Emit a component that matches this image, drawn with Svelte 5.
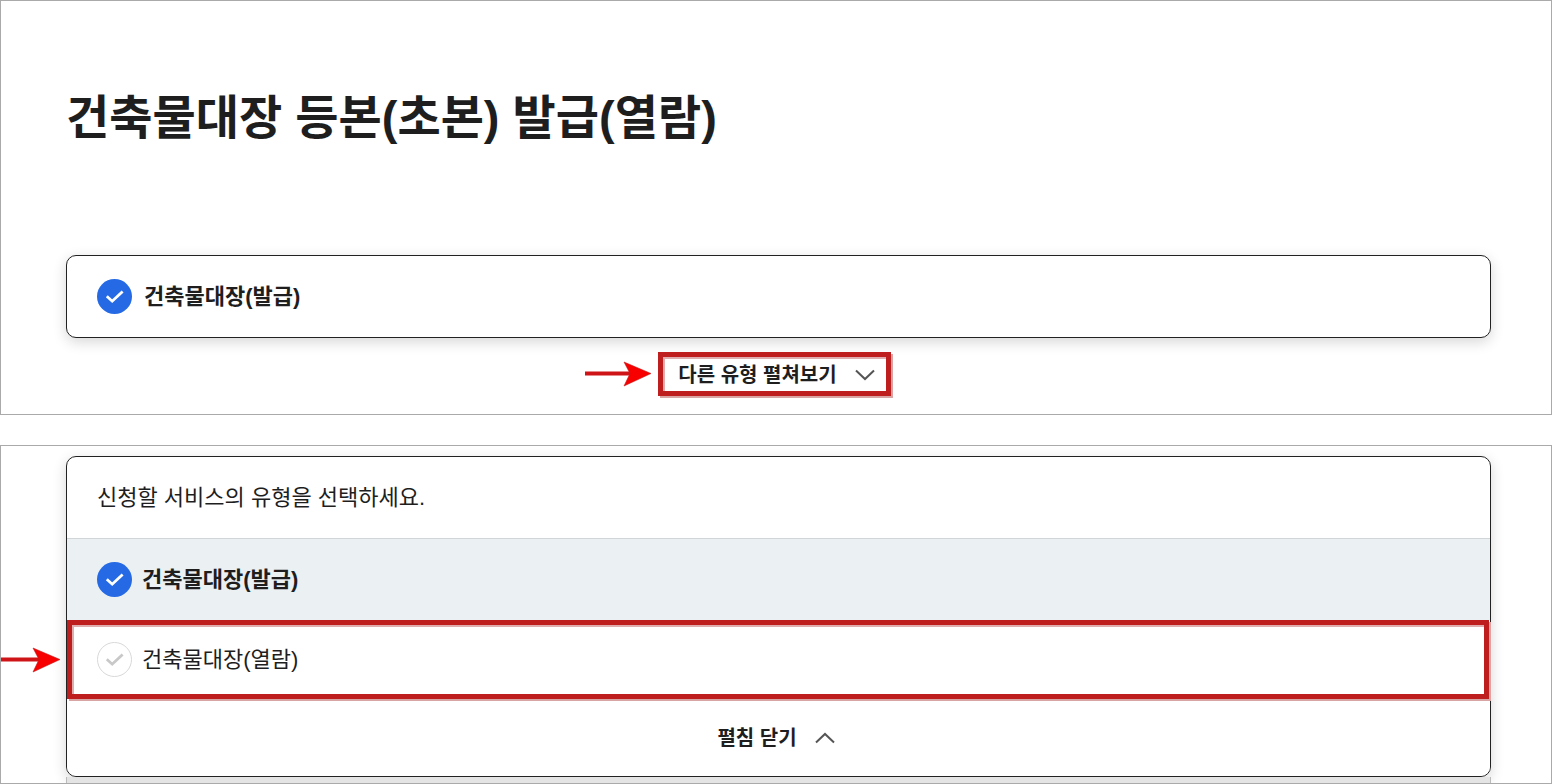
<script>
  const options = [
    { id: 'issue', label: '건축물대장(발급)' },
    { id: 'view', label: '건축물대장(열람)', marked: true }
  ];
  let selected = $state('issue');
</script>

{#snippet check(on)}
  <svg class="check" viewBox="0 0 35 35" aria-hidden="true">
    {#if on}
      <circle cx="17.5" cy="17.5" r="17.5" fill="#256ae4" />
    {:else}
      <circle cx="17.5" cy="17.5" r="17" fill="#fff" stroke="#d8d8d8" />
    {/if}
    <path d="M9.8 17.3L15.2 22.2L25.6 12.4" fill="none" stroke={on ? '#fff' : '#c8c8c8'} stroke-width="2.8" />
  </svg>
{/snippet}

{#snippet arrow()}
  <svg class="arrow" viewBox="0 0 66 26" aria-hidden="true">
    <path d="M0 12.5H46" stroke="#cf1418" stroke-width="4" />
    <path d="M39 1L66 12.5L39 25L45 12.5Z" fill="#f80000" stroke="#c41a1a" stroke-width=".6" />
  </svg>
{/snippet}

<main>
  <section class="panel first">
    <h1>건축물대장 등본(초본) 발급(열람)</h1>
    <div class="card current">
      {@render check(true)}
      <strong>건축물대장(발급)</strong>
    </div>
    <div class="expand">
      <button type="button" class="marked">
        {@render arrow()}
        다른 유형 펼쳐보기
        <svg class="chevron" viewBox="0 0 20 12" aria-hidden="true"><path d="M1 1.5L10 10L19 1.5" /></svg>
      </button>
    </div>
  </section>

  <section class="panel second">
    <fieldset class="card">
      <legend>신청할 서비스의 유형을 선택하세요.</legend>
      {#each options as option (option.id)}
        <label class="option" class:selected={selected === option.id} class:marked={option.marked}>
          {#if option.marked}{@render arrow()}{/if}
          <input type="radio" name="type" value={option.id} bind:group={selected} />
          {@render check(selected === option.id)}
          <span>{option.label}</span>
        </label>
      {/each}
      <button type="button" class="collapse">
        펼침 닫기
        <svg class="chevron" viewBox="0 0 20 12" aria-hidden="true"><path d="M1 10.5L10 2L19 10.5" /></svg>
      </button>
    </fieldset>
    <div class="underlay"></div>
  </section>
</main>

<style>
  :global(body) {
    margin: 0;
    background: #fff;
  }

  main {
    display: flex;
    flex-direction: column;
    gap: 30px;
    font-family: 'Liberation Sans', 'Noto Sans CJK KR', sans-serif;
    font-size: 22px;
    line-height: 32px;
    color: #1e1e1e;
  }

  .panel {
    box-sizing: border-box;
    border: 1px solid #aaa;
    overflow: hidden;
  }

  .first {
    padding: 82px 60px 18px 65px;
  }

  .second {
    padding: 10px 60px 0 65px;
  }

  h1 {
    margin: 0 0 102px;
    font-size: 47px;
    line-height: 70px;
    font-weight: 700;
  }

  .card {
    box-sizing: border-box;
    margin: 0;
    padding: 0;
    border: 1px solid #222;
    border-radius: 10px;
    background: #fff;
    box-shadow: 0 4px 14px rgba(0, 0, 0, 0.16);
  }

  .current {
    display: flex;
    align-items: center;
    gap: 12px;
    padding: 23px 30px;
  }

  .check {
    flex: none;
    width: 35px;
    height: 35px;
  }

  .expand {
    display: flex;
    justify-content: center;
    margin-top: 14px;
    padding-right: 8px;
  }

  button {
    display: flex;
    align-items: center;
    justify-content: center;
    gap: 18px;
    border: 0;
    background: #fff;
    color: inherit;
    font: inherit;
    font-size: 20px;
    font-weight: 700;
    cursor: pointer;
  }

  .marked {
    position: relative;
    border: 5px solid #bf1e1e;
    box-shadow: 2px 2px 0 #d9a4a4, inset 2px 2px 0 #dfadad;
  }

  .expand button {
    padding: 2px 11px 0 15px;
  }

  .chevron {
    width: 20px;
    height: 12px;
    fill: none;
    stroke: #555;
    stroke-width: 2;
  }

  .arrow {
    position: absolute;
    right: calc(100% + 12px);
    top: 50%;
    width: 66px;
    height: 26px;
    transform: translateY(-50%);
  }

  fieldset {
    display: flex;
    flex-direction: column;
    min-width: 0;
  }

  legend {
    float: left;
    box-sizing: border-box;
    width: 100%;
    padding: 25px 30px 24px;
    border-bottom: 1px solid #d2d5d7;
  }

  .option {
    display: flex;
    align-items: center;
    gap: 10px;
    padding: 23px 30px;
    cursor: pointer;
  }

  .option input {
    position: absolute;
    opacity: 0;
    pointer-events: none;
  }

  .option.selected {
    background: #ebf0f3;
    font-weight: 700;
  }

  .option.marked {
    margin-right: 1px;
    padding: 17px 25px;
  }

  .collapse {
    padding: 23px 35px 22px 30px;
    border-radius: 0 0 10px 10px;
  }

  .underlay {
    height: 6px;
    border: solid #bbb;
    border-width: 0 1px;
    background: #e4e4e4;
  }
</style>
